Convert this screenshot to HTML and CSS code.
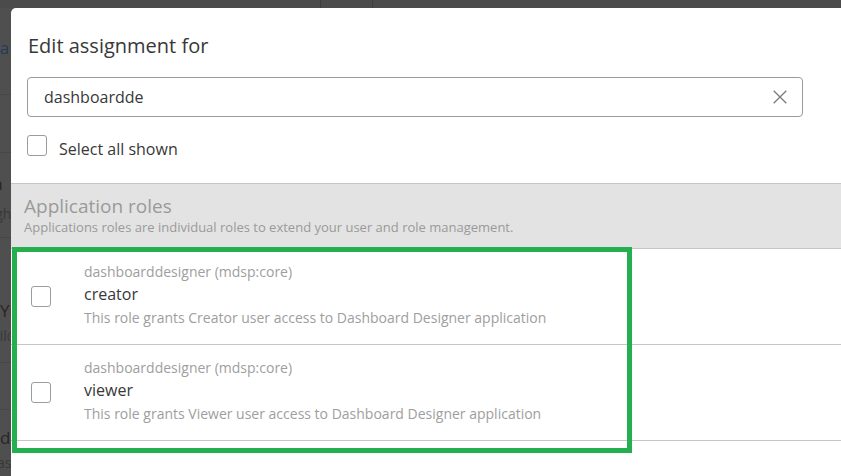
FILE: index.html
```html
<!DOCTYPE html>
<html lang="en">
<head>
<meta charset="utf-8">
<title>Edit assignment</title>
<link rel="stylesheet" href="styles.css">
</head>
<body>
<div class="backdrop">
  <div class="topbar"><div class="tb-seg1"></div><div class="tb-seg2"></div></div>
  <div class="bg-list">
    <div class="bg-head">Data</div>
    <div class="bg-row bg-row-a"></div>
    <div class="bg-row bg-row-b"><div class="bg-name">Function</div><div class="bg-sub">Rights</div></div>
    <div class="bg-row bg-row-c"><div class="bg-name">Yu</div><div class="bg-sub">mail@</div></div>
    <div class="bg-row bg-row-d"></div>
    <div class="bg-row bg-row-e"><div class="bg-name">Code</div><div class="bg-sub">Basis</div></div>
  </div>
</div>

<div class="modal">
  <h2 class="modal-title">Edit assignment for</h2>
  <div class="search">
    <span class="search-text">dashboardde</span>
    <svg class="clear-icon" width="14" height="14" viewBox="0 0 14 14" aria-hidden="true"><path d="M0.7 0.7 L13.3 13.3 M13.3 0.7 L0.7 13.3" stroke="#7a7a7a" stroke-width="1.3" fill="none"/></svg>
  </div>
  <label class="select-all"><span class="checkbox"></span><span class="select-label">Select all shown</span></label>

  <div class="section-head">
    <div class="section-title">Application roles</div>
    <div class="section-sub">Applications roles are individual roles to extend your user and role management.</div>
  </div>

  <div class="role-row">
    <span class="checkbox"></span>
    <div class="role-text">
      <div class="role-app">dashboarddesigner (mdsp:core)</div>
      <div class="role-name">creator</div>
      <div class="role-desc">This role grants Creator user access to Dashboard Designer application</div>
    </div>
  </div>
  <div class="role-row">
    <span class="checkbox"></span>
    <div class="role-text">
      <div class="role-app">dashboarddesigner (mdsp:core)</div>
      <div class="role-name">viewer</div>
      <div class="role-desc">This role grants Viewer user access to Dashboard Designer application</div>
    </div>
  </div>

  <div class="highlight"></div>
</div>
</body>
</html>
```

FILE: styles.css
```css
* { box-sizing: border-box; }

body {
  margin: 0;
  width: 841px;
  height: 476px;
  overflow: hidden;
  position: relative;
  background: #4f4f4f;
  font-family: "Open Sans", "Noto Sans", sans-serif;
}

/* dimmed page behind the dialog */
.backdrop {
  height: 100%;
  display: flex;
  flex-direction: column;
  overflow: hidden;
}
.topbar {
  height: 8px;
  display: flex;
  flex: none;
  background: #4b4b4b;
}
.tb-seg1 { width: 321px; border-right: 1px solid #3e3e3e; }
.tb-seg2 { width: 52px; border-right: 1px solid #3e3e3e; }

.bg-list {
  margin-left: -28px;
  width: 200px;
  display: flex;
  flex-direction: column;
}
.bg-head {
  height: 87px;
  display: flex;
  align-items: center;
  padding-bottom: 8px;
  color: #1f3d5a;
  font-size: 17px;
  border-bottom: 1px solid #474747;
}
.bg-row { border-bottom: 1px solid #474747; }
.bg-row-a { height: 58px; }
.bg-row-b { height: 85px; padding-top: 19px; }
.bg-row-c { height: 125px; padding-top: 61px; }
.bg-row-d { height: 47px; }
.bg-row-e { height: 80px; padding-top: 16px; border-bottom: 0; }
.bg-name { font-size: 17px; color: #262626; line-height: 24px; }
.bg-sub { font-size: 14px; color: #383838; line-height: 22px; margin-top: 2px; }
.bg-row-b .bg-sub { margin-top: 7px; }
.bg-row-b .bg-name { margin-left: -38px; }
.bg-row-b .bg-sub { margin-left: 11px; }
.bg-row-c .bg-name { margin-left: 28px; }
.bg-row-c .bg-sub { margin-left: 7px; }
.bg-row-e .bg-name { margin-left: 7px; }
.bg-row-e .bg-sub { margin-left: 16px; }

/* dialog */
.modal {
  position: absolute;
  left: 11px;
  top: 8px;
  right: 0;
  bottom: 0;
  background: #fff;
  border-top-left-radius: 5px;
  overflow: hidden;
}
.modal-title {
  margin: 0;
  padding: 24px 17px 0;
  font-size: 20px;
  font-weight: 400;
  line-height: 28px;
  color: #383838;
}
.search {
  margin: 17px 0 0 16px;
  width: 776px;
  height: 40px;
  border: 1px solid #9a9a9a;
  border-radius: 4px;
  display: flex;
  align-items: center;
  justify-content: space-between;
  padding: 0 15px 0 16px;
}
.search-text { font-size: 16px; color: #383838; }
.clear-icon { flex: none; }

.select-all {
  display: flex;
  align-items: flex-start;
  gap: 12px;
  margin: 18px 0 0 16px;
  font-size: 16px;
  color: #383838;
}
.select-label { line-height: 24px; margin-top: 2px; }

.checkbox {
  width: 20px;
  height: 21px;
  flex: none;
  border: 1px solid #9c9c9c;
  border-radius: 3px;
  background: #fff;
}

.section-head {
  margin-top: 22px;
  height: 66px;
  background: #e3e3e3;
  border-top: 1px solid #c6c6c6;
  border-bottom: 1px solid #c6c6c6;
  padding: 10px 13px 0;
  color: #9a9a9a;
}
.section-title { font-size: 19px; line-height: 24px; }
.section-sub { font-size: 13px; line-height: 18px; }

.role-row {
  height: 96px;
  border-bottom: 1px solid #c6c6c6;
  display: flex;
  align-items: flex-start;
  padding-left: 20px;
}
.role-row .checkbox { align-self: center; }
.role-text { margin-left: 33px; padding-top: 13px; }
.role-app { font-size: 14px; line-height: 20px; color: #9e9e9e; }
.role-name { font-size: 16px; line-height: 24px; color: #383838; }
.role-desc { font-size: 14px; line-height: 20px; margin-top: 2px; color: #9e9e9e; }

/* annotation rectangle drawn over the rows */
.highlight {
  position: absolute;
  left: 1px;
  top: 239px;
  width: 620px;
  height: 206px;
  border: 5px solid #24b04f;
  pointer-events: none;
}
```
